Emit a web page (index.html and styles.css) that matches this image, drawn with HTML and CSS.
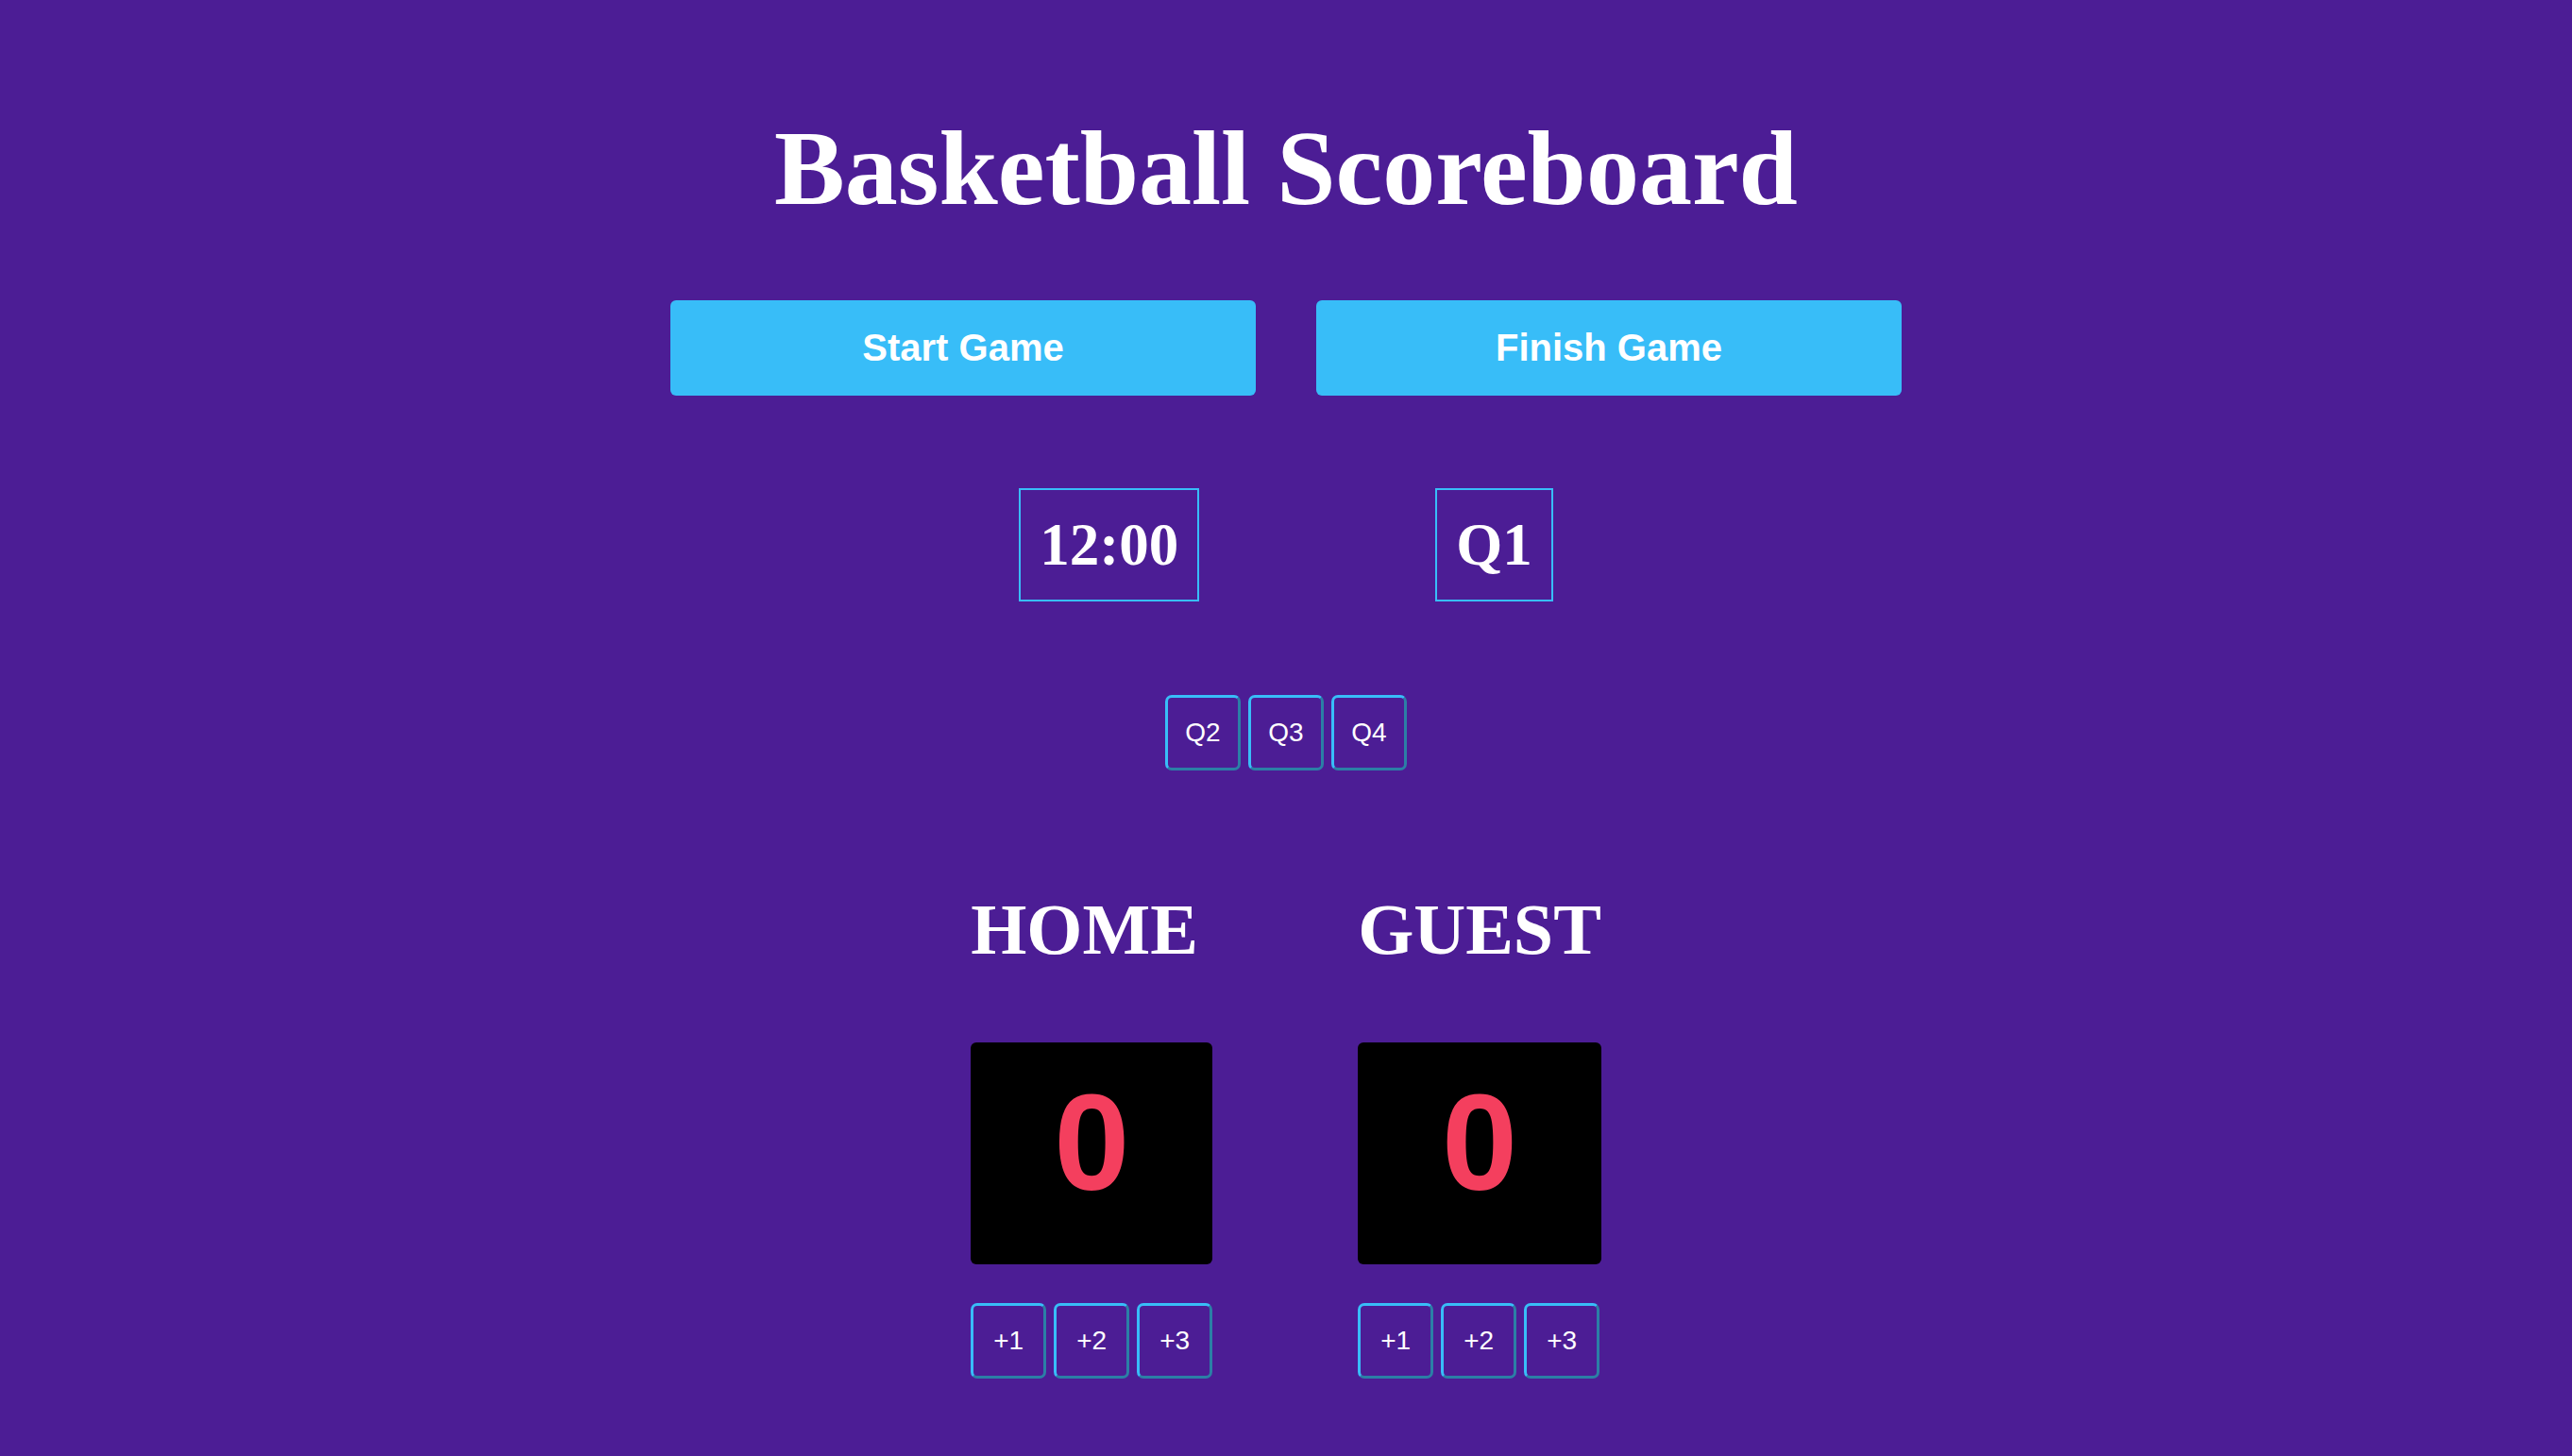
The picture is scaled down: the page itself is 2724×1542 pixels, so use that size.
FILE: index.html
```html
<!DOCTYPE html>
<html lang="en">
<head>
<meta charset="utf-8">
<title>Basketball Scoreboard</title>
<link rel="stylesheet" href="styles.css">
</head>
<body>
<main class="board">
  <h1 class="title">Basketball Scoreboard</h1>
  <div class="controls">
    <button class="btn-main">Start Game</button>
    <button class="btn-main">Finish Game</button>
  </div>
  <div class="status">
    <div class="status-box">12:00</div>
    <div class="status-box">Q1</div>
  </div>
  <div class="quarters">
    <button class="btn-small">Q2</button>
    <button class="btn-small">Q3</button>
    <button class="btn-small">Q4</button>
  </div>
  <div class="teams">
    <section class="team">
      <h2 class="team-name">HOME</h2>
      <div class="score">0</div>
      <div class="points">
        <button class="btn-small">+1</button>
        <button class="btn-small">+2</button>
        <button class="btn-small">+3</button>
      </div>
    </section>
    <section class="team">
      <h2 class="team-name">GUEST</h2>
      <div class="score">0</div>
      <div class="points">
        <button class="btn-small">+1</button>
        <button class="btn-small">+2</button>
        <button class="btn-small">+3</button>
      </div>
    </section>
  </div>
</main>
</body>
</html>
```

FILE: styles.css
```css
html, body {
  margin: 0;
  padding: 0;
}

body {
  background: #4c1d95;
  color: #ffffff;
  font-family: "Liberation Serif", "Times New Roman", serif;
  min-height: 100vh;
}

.board {
  display: flex;
  flex-direction: column;
  align-items: center;
  padding-top: 122px;
}

.title {
  margin: 0;
  font-size: 112px;
  line-height: 112px;
  font-weight: bold;
}

.controls {
  display: flex;
  gap: 64px;
  margin-top: 84px;
}

.btn-main {
  width: 620px;
  height: 101px;
  border: none;
  border-radius: 6px;
  background: #38bdf8;
  color: #ffffff;
  font-family: "Liberation Sans", Arial, sans-serif;
  font-weight: bold;
  font-size: 40px;
  padding: 0;
}

.status {
  display: flex;
  gap: 250px;
  margin-top: 98px;
}

.status-box {
  border: 2px solid #38bdf8;
  padding: 20px;
  font-size: 63px;
  line-height: 76px;
  font-weight: bold;
}

.quarters {
  display: flex;
  gap: 8px;
  margin-top: 99px;
}

.btn-small {
  width: 80px;
  height: 80px;
  padding: 0;
  border: 3px solid;
  border-color: #38bdf8 #2b7fa6 #2b7fa6 #38bdf8;
  border-radius: 7px;
  background: transparent;
  color: #ffffff;
  font-family: "Liberation Sans", Arial, sans-serif;
  font-size: 28px;
}

.teams {
  display: flex;
  gap: 154px;
  margin-top: 130px;
}

.team {
  display: flex;
  flex-direction: column;
}

.team-name {
  margin: 0;
  font-size: 76px;
  line-height: 76px;
  font-weight: bold;
}

.score {
  margin-top: 82px;
  height: 235px;
  box-sizing: border-box;
  padding-bottom: 22px;
  background: #000000;
  border-radius: 6px;
  display: flex;
  align-items: center;
  justify-content: center;
  color: #f43f5e;
  font-family: "Liberation Sans", Arial, sans-serif;
  font-weight: bold;
  font-size: 144px;
  line-height: 144px;
}

.points {
  display: flex;
  gap: 8px;
  margin-top: 41px;
}
```
